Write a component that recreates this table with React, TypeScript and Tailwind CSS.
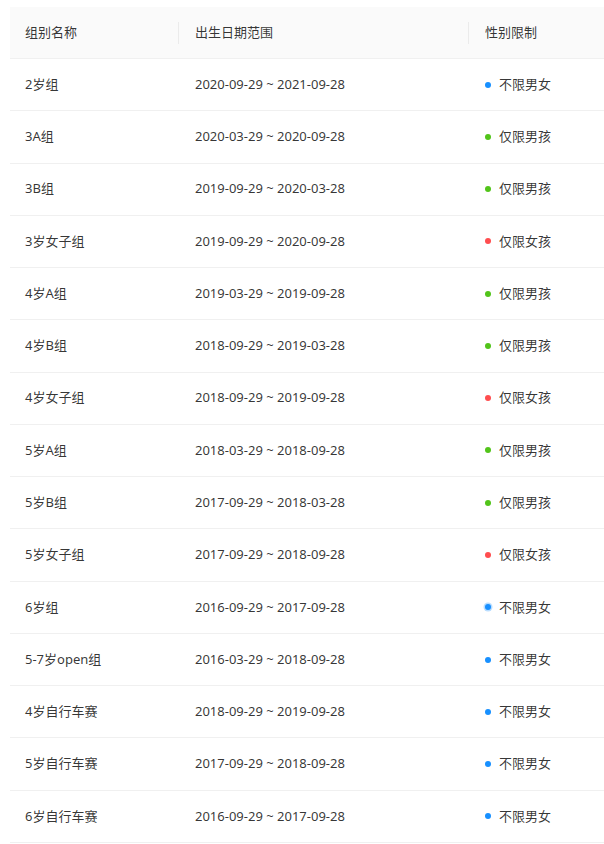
import React from 'react';

type Gender = 'all' | 'boy' | 'girl';

const rows: { name: string; range: string; gender: Gender; active?: boolean }[] = [
  { name: '2岁组', range: '2020-09-29 ~ 2021-09-28', gender: 'all' },
  { name: '3A组', range: '2020-03-29 ~ 2020-09-28', gender: 'boy' },
  { name: '3B组', range: '2019-09-29 ~ 2020-03-28', gender: 'boy' },
  { name: '3岁女子组', range: '2019-09-29 ~ 2020-09-28', gender: 'girl' },
  { name: '4岁A组', range: '2019-03-29 ~ 2019-09-28', gender: 'boy' },
  { name: '4岁B组', range: '2018-09-29 ~ 2019-03-28', gender: 'boy' },
  { name: '4岁女子组', range: '2018-09-29 ~ 2019-09-28', gender: 'girl' },
  { name: '5岁A组', range: '2018-03-29 ~ 2018-09-28', gender: 'boy' },
  { name: '5岁B组', range: '2017-09-29 ~ 2018-03-28', gender: 'boy' },
  { name: '5岁女子组', range: '2017-09-29 ~ 2018-09-28', gender: 'girl' },
  { name: '6岁组', range: '2016-09-29 ~ 2017-09-28', gender: 'all', active: true },
  { name: '5-7岁open组', range: '2016-03-29 ~ 2018-09-28', gender: 'all' },
  { name: '4岁自行车赛', range: '2018-09-29 ~ 2019-09-28', gender: 'all' },
  { name: '5岁自行车赛', range: '2017-09-29 ~ 2018-09-28', gender: 'all' },
  { name: '6岁自行车赛', range: '2016-09-29 ~ 2017-09-28', gender: 'all' },
];

const genderLabel: Record<Gender, string> = {
  all: '不限男女',
  boy: '仅限男孩',
  girl: '仅限女孩',
};

function Dot({ gender, active }: { gender: Gender; active?: boolean }) {
  if (gender === 'boy') return <span className="mr-2 inline-block h-[6px] w-[6px] rounded-full bg-[#52c41a]" />;
  if (gender === 'girl') return <span className="mr-2 inline-block h-[6px] w-[6px] rounded-full bg-[#ff4d4f]" />;
  return (
    <span
      className={
        active
          ? 'mr-2 inline-block h-[6px] w-[6px] rounded-full bg-[#1890ff] shadow-[0_0_0_1.5px_rgba(24,144,255,0.3)]'
          : 'mr-2 inline-block h-[6px] w-[6px] rounded-full bg-[#1890ff]'
      }
    />
  );
}

export default function App() {
  return (
    <div className="h-[844px] w-[604px] overflow-hidden bg-white pt-[7px] pl-[10px] font-['Noto_Sans','Noto_Sans_CJK_SC',sans-serif] text-[13px] text-black/80">
      <div className="w-[620px]">
        <div className="grid h-[52px] grid-cols-[169px_290px_1fr] items-center border-b border-[#f0f0f0] bg-[#fafafa]">
          <div className="relative px-[15px]">
            组别名称
            <span className="absolute top-1/2 right-0 h-[22px] w-px -translate-y-1/2 bg-[#ebebeb]" />
          </div>
          <div className="relative px-[16px]">
            出生日期范围
            <span className="absolute top-1/2 right-0 h-[22px] w-px -translate-y-1/2 bg-[#ebebeb]" />
          </div>
          <div className="px-[16px]">性别限制</div>
        </div>
        {rows.map((r) => (
          <div
            key={r.name}
            className="grid h-[52.27px] grid-cols-[169px_290px_1fr] items-center border-b border-[#f0f0f0]"
          >
            <div className="px-[15px]">{r.name}</div>
            <div className="px-[16px]">{r.range}</div>
            <div className="flex items-center px-[16px]">
              <Dot gender={r.gender} active={r.active} />
              <span>{genderLabel[r.gender]}</span>
            </div>
          </div>
        ))}
      </div>
    </div>
  );
}
